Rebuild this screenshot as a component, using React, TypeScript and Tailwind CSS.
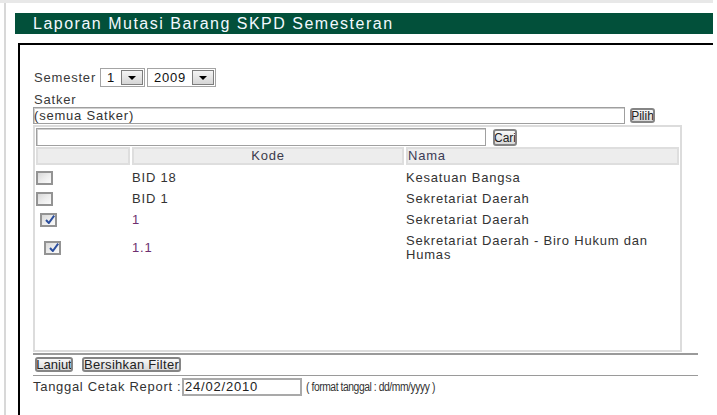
import React from "react";

function Select({ value, w }: { value: string; w: string }) {
  return (
    <div className={`flex h-[19px] items-stretch border border-[#a4a4a4] bg-white p-px ${w}`}>
      <div className="flex flex-1 items-center pl-[5px] text-[13px] leading-none tracking-[0.8px] text-[#111]">
        {value}
      </div>
      <div className="flex w-[22px] items-center justify-center border border-[#7d7d7d] bg-gradient-to-b from-[#f4f4f4] to-[#d6d6d6]">
        <svg width="8" height="4" viewBox="0 0 8 4">
          <path d="M0 0h8L4 4z" fill="#000" />
        </svg>
      </div>
    </div>
  );
}

function Btn({ className, children }: { className: string; children: React.ReactNode }) {
  return (
    <button
      type="button"
      className={`flex items-center justify-center overflow-hidden whitespace-nowrap rounded-[3px] border-2 border-[#858585] bg-gradient-to-b from-[#f8f8f8] to-[#d9d9d9] p-0 leading-none text-[#222] ${className}`}
    >
      {children}
    </button>
  );
}

function Check({ checked }: { checked?: boolean }) {
  return (
    <div className="relative h-[14px] w-[17px] border-2 border-[#939393] bg-gradient-to-br from-[#d8d8d8] via-[#ececec] to-[#fbfbfb]">
      {checked && (
        <svg className="absolute left-[3px] top-0" width="10" height="9" viewBox="0 0 10 9">
          <path d="M1 5 L3.8 8 L9.2 0.6" stroke="#2c4f9e" strokeWidth="2" fill="none" />
        </svg>
      )}
    </div>
  );
}

const rows = [
  { ind: "pl-0", checked: false, kode: "BID 18", nama: ["Kesatuan Bangsa"], purple: false, h: "h-[19px]" },
  { ind: "pl-0", checked: false, kode: "BID 1", nama: ["Sekretariat Daerah"], purple: false, h: "h-[19px]" },
  { ind: "pl-[4px]", checked: true, kode: "1", nama: ["Sekretariat Daerah"], purple: true, h: "h-[19px]" },
  {
    ind: "pl-[8px]",
    checked: true,
    kode: "1.1",
    nama: ["Sekretariat Daerah - Biro Hukum dan", "Humas"],
    purple: true,
    h: "h-[34px]",
  },
];

export default function App() {
  return (
    <div className="h-[415px] w-[717px] overflow-hidden bg-white font-['Liberation_Sans',Arial,sans-serif] text-[#333]">
      <div className="h-[3px] w-[713px] bg-[#e8e8e8]" />
      <div className="ml-[4px] h-[412px] w-[709px] border-l-2 border-[#d8d8d8] pl-[9px] pt-[10px]">
        <div className="flex h-[21px] w-[698px] items-center bg-[#02503a] pl-[18px] text-[16px] leading-none tracking-[1.5px] text-[#f3f9ff]">
          Laporan Mutasi Barang SKPD Semesteran
        </div>
        <div className="ml-[3px] mt-[9px] h-[380px] w-[695px] border-l-2 border-t-2 border-black pl-[13px] pt-[23px]">
          {/* Semester */}
          <div className="flex h-[19px] items-center">
            <span className="w-[67px] pl-px text-[13px] tracking-[0.8px] text-[#3a3a3a]">Semester</span>
            <Select value="1" w="w-[45px]" />
            <div className="ml-[2px]">
              <Select value="2009" w="w-[69px]" />
            </div>
          </div>

          {/* Satker */}
          <div className="mt-[5px] h-[15px] pl-px text-[13px] leading-[15px] tracking-[0.8px] text-[#3a3a3a]">
            Satker
          </div>
          <div className="flex items-start">
            <div className="flex h-[17px] w-[592px] items-center border border-[#9f9f9f] pl-0 text-[13px] tracking-[0.8px] text-[#333] shadow-[inset_1px_1px_0_#d0d0d0]">
              (semua Satker)
            </div>
            <Btn className="ml-[5px] mt-px h-[15px] w-[25px] text-[12px]">Pilih</Btn>
          </div>

          {/* Panel */}
          <div className="mt-px w-[665px] border-b-2 border-[#9a9a9a] pb-px">
            <div className="h-[227px] w-[649px] border-2 border-[#dcdcdc] pl-px pt-px">
              <div className="flex items-start">
                <div className="h-[18px] w-[450px] border border-[#a0a0a0] shadow-[inset_1px_1px_0_#d0d0d0]" />
                <Btn className="ml-[7px] mt-px h-[17px] w-[24px] text-[12px]">Cari</Btn>
              </div>
              <div className="mt-px grid grid-cols-[94px_272px_273px] gap-x-[2px] gap-y-[2px] text-[13px] tracking-[0.8px]">
                <div className="mb-px h-[18px] border-2 border-[#dedede] bg-[#ededed]" />
                <div className="mb-px flex h-[18px] items-center justify-center border-2 border-[#dedede] bg-[#ededed] text-[#3b3b4b]">
                  Kode
                </div>
                <div className="mb-px flex h-[18px] items-center border-2 border-[#dedede] bg-[#ededed] text-[#3b3b55]">
                  Nama
                </div>
                {rows.map((r, i) => (
                  <React.Fragment key={i}>
                    <div className={`flex items-center ${r.h} ${r.ind}`}>
                      <Check checked={r.checked} />
                    </div>
                    <div className={`flex items-center ${r.h} ${r.purple ? "text-[#6e2f70]" : "text-[#333]"}`}>
                      {r.kode}
                    </div>
                    <div className={`flex items-center ${r.h} leading-[14px] text-[#333]`}>
                      <div>
                        {r.nama.map((n, j) => (
                          <div key={j}>{n}</div>
                        ))}
                      </div>
                    </div>
                  </React.Fragment>
                ))}
              </div>
            </div>
          </div>

          {/* Buttons */}
          <div className="flex w-[665px] gap-[9px] border-b border-[#9a9a9a] pb-[3px] pl-[2px] pt-[2px]">
            <Btn className="h-[15px] w-[38px] text-[13px]">Lanjut</Btn>
            <Btn className="h-[15px] w-[99px] text-[13px] tracking-[0.3px]">Bersihkan Filter</Btn>
          </div>

          {/* Date */}
          <div className="mt-[2px] flex h-[18px] items-center">
            <span className="w-[149px] whitespace-nowrap text-[13px] tracking-[0.7px] text-[#333]">
              Tanggal Cetak Report :
            </span>
            <div className="flex h-[18px] w-[120px] items-center border-2 border-[#a9a9a9] pl-px text-[13px] tracking-[0.8px] text-[#222]">
              24/02/2010
            </div>
            <span className="ml-[4px] origin-left scale-x-[0.86] whitespace-nowrap text-[12px] tracking-[-0.5px] text-[#333]">
              ( format tanggal : dd/mm/yyyy )
            </span>
          </div>
        </div>
      </div>
    </div>
  );
}
